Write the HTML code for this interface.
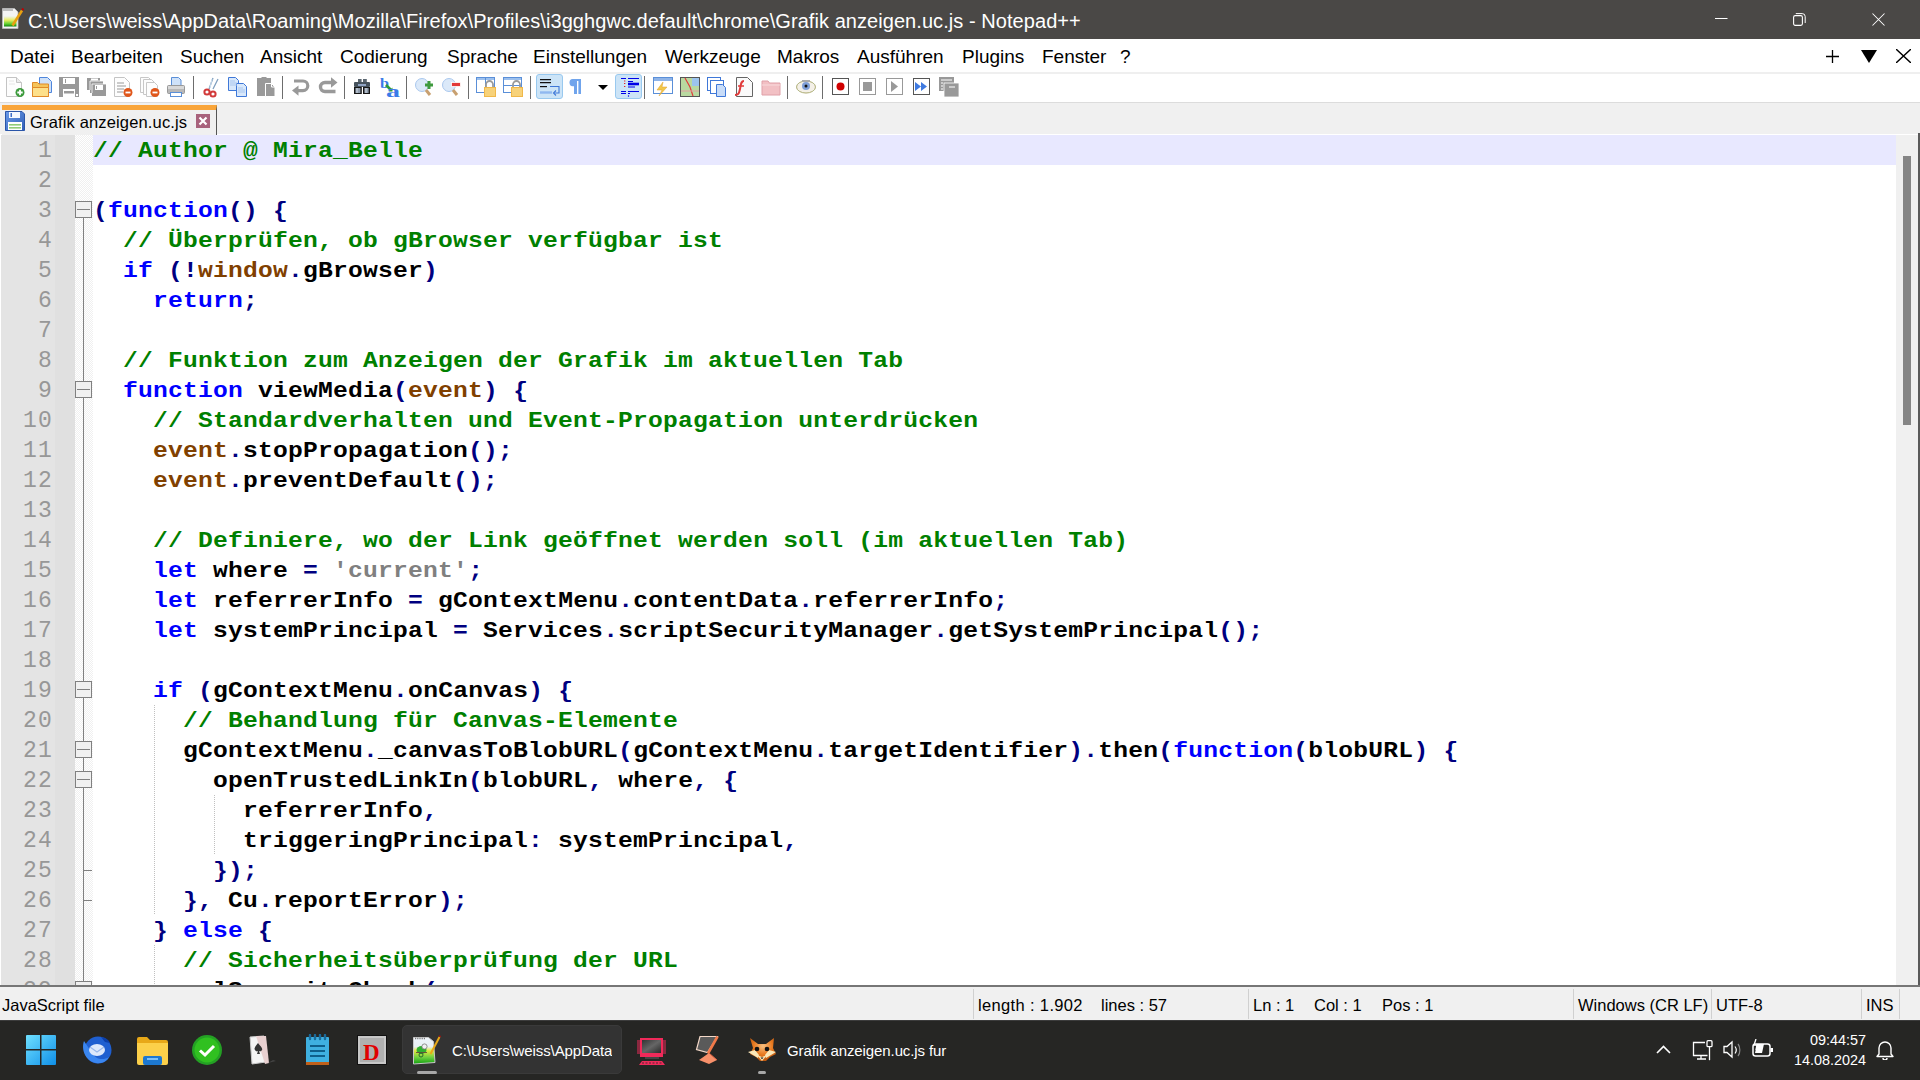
<!DOCTYPE html>
<html><head><meta charset="utf-8">
<style>
*{box-sizing:border-box;margin:0;padding:0}
html,body{width:1920px;height:1080px;overflow:hidden;background:#fff;font-family:"Liberation Sans",sans-serif}
.abs{position:absolute}
#title{position:absolute;left:0;top:0;width:1920px;height:39px;background:#4a4846;color:#fff}
#title .t{position:absolute;left:28px;top:10px;font-size:20px;letter-spacing:0.06px;white-space:nowrap}
#menu{position:absolute;left:0;top:39px;width:1920px;height:35px;background:#fff;border-bottom:2px solid #efefef}
#menu .m{position:absolute;top:7px;font-size:19px;color:#000;white-space:nowrap}
#tool{position:absolute;left:0;top:74px;width:1920px;height:29px;background:#fff;border-bottom:1px solid #dcdcdc}
.ic{position:absolute;top:3px;width:20px;height:20px;overflow:visible}
.tsep{position:absolute;top:2px;width:1px;height:23px;background:#6d6d6d}
.press{position:absolute;top:0px;width:27px;height:25px;background:#cce4f7;border:1px solid #99c9ef;border-radius:3px}
#tabs{position:absolute;left:0;top:103px;width:1920px;height:32px;background:#f0f0f0;border-bottom:1px solid #fff}
#editor{position:absolute;left:0;top:135px;width:1920px;height:850px;background:#fff;overflow:hidden}
#lnm{position:absolute;left:1px;top:135px;width:54px;height:850px;background:#e4e4e4}
#bkm{position:absolute;left:55px;top:135px;width:20px;height:850px;background:#e0e0e0}
#fld{position:absolute;left:75px;top:135px;width:18px;height:850px;background-color:#fff;
 background-image:linear-gradient(45deg,#f0f0f0 25%,transparent 25%,transparent 75%,#f0f0f0 75%),linear-gradient(45deg,#f0f0f0 25%,transparent 25%,transparent 75%,#f0f0f0 75%);
 background-size:2px 2px;background-position:0 0,1px 1px}
#curline{position:absolute;left:93px;top:135px;width:1803px;height:30px;background:#e8e8ff}
.ln{position:absolute;left:93px;height:30px;line-height:30px;font-family:"Liberation Mono",monospace;font-weight:bold;font-size:22px;letter-spacing:0.193px;transform:scaleX(1.12);transform-origin:0 0;white-space:pre;color:#000}
.num{position:absolute;left:1px;width:52px;height:30px;line-height:30px;text-align:right;font-family:"Liberation Mono",monospace;font-size:23px;letter-spacing:1.2px;color:#979797}
.c{color:#008000}.k{color:#0000ff}.o{color:#000080}.b{color:#804000}.s{color:#808080}
.guide{position:absolute;width:1px;background-image:linear-gradient(#c0c0c0 50%,transparent 50%);background-size:1px 2px}
#fline{position:absolute;left:83px;top:218px;width:1px;height:767px;background:#808080}
.fbox{position:absolute;left:75px;width:17px;height:17px;border:1px solid #808080;background:#f0f0f0}
.fbox:after{content:"";position:absolute;left:1px;top:7px;width:13px;height:1px;background:#808080}
.ftick{position:absolute;left:83px;width:9px;height:1px;background:#808080}
#vscroll{position:absolute;left:1896px;top:135px;width:22px;height:850px;background:#f0f0f0}
#thumb{position:absolute;left:1903px;top:156px;width:8px;height:269px;background:#858585}
#rborder{position:absolute;left:1918px;top:133px;width:2px;height:854px;background:#5a5a5a}
#hline{position:absolute;left:0;top:985px;width:1920px;height:2px;background:#767676}
#status{position:absolute;left:0;top:987px;width:1920px;height:33px;background:#f0f0f0}
#status .s1{position:absolute;top:9px;font-size:16.5px;color:#000;white-space:nowrap}
#status .sep{position:absolute;top:2px;width:1px;height:30px;background:#d0d0d0}
#taskbar{position:absolute;left:0;top:1020px;width:1920px;height:60px;background:#262624}
#tab{position:absolute;left:2px;top:2px;width:215px;height:31px;background:#f0f0f0;border-top:5px solid #f9a53a;border-right:1px solid #555}
#tabtxt{position:absolute;left:30px;top:10px;font-size:16.5px;color:#000;white-space:nowrap}
#tbline{position:absolute;left:0;top:0;width:1920px;height:1px;background:#3c3c3c}
.tbt{position:absolute;top:22px;font-size:15px;letter-spacing:-0.1px;color:#fff;white-space:nowrap;overflow:hidden}
#actbtn{position:absolute;left:402px;top:5px;width:220px;height:49px;background:#333;border:1px solid #3a3a3a;border-radius:5px}
#ind1{position:absolute;left:417px;top:51px;width:20px;height:3px;border-radius:2px;background:#a8a8a8}
#ind2{position:absolute;left:758px;top:51px;width:8px;height:3px;border-radius:2px;background:#a8a8a8}
#clk1{position:absolute;left:1790px;top:12px;width:76px;text-align:right;font-size:14.4px;color:#fff}
#clk2{position:absolute;left:1780px;top:32px;width:86px;text-align:right;font-size:14.4px;color:#fff}
</style></head><body>
<div id="title"><svg class="abs" style="left:2px;top:8px" width="22" height="21" viewBox="0 0 22 21"><defs><linearGradient id="npg" x1="0" y1="0" x2="0" y2="1"><stop offset="0" stop-color="#f0f4f8"/><stop offset=".4" stop-color="#e8ec60"/><stop offset=".75" stop-color="#60d030"/><stop offset="1" stop-color="#108010"/></linearGradient></defs><path d="M.5 .5h12l3.5 3.5v16.5h-15.5z" fill="#f4f4f4" stroke="#bbb" stroke-width=".8"/><path d="M2 8h12.5v10.5h-12.5z" fill="url(#npg)"/><path d="M1.5 2h9" stroke="#888" stroke-width="2" stroke-dasharray="1 1"/><path d="M20 2.5l-9.5 15" stroke="#e8a010" stroke-width="2.6"/><path d="M20.3 2l1-1.5" stroke="#c00000" stroke-width="2.4"/></svg>
<div class="t">C:\Users\weiss\AppData\Roaming\Mozilla\Firefox\Profiles\i3gghgwc.default\chrome\Grafik anzeigen.uc.js - Notepad++</div>
<svg class="abs" style="left:1715px;top:13px" width="13" height="13" viewBox="0 0 13 13"><path d="M0 5.5h12.5" stroke="#fff" stroke-width="1"/></svg>
<svg class="abs" style="left:1793px;top:13px" width="13" height="13" viewBox="0 0 13 13"><rect x=".6" y="2.6" width="8.8" height="9.8" rx="1.6" fill="none" stroke="#fff" stroke-width="1.1"/><path d="M2.8 .6h6.4a3 3 0 0 1 3 3v6.4" fill="none" stroke="#fff" stroke-width="1"/></svg>
<svg class="abs" style="left:1872px;top:13px" width="13" height="13" viewBox="0 0 13 13"><path d="M.5 .5l12 12M12.5 .5l-12 12" stroke="#fff" stroke-width="1.05"/></svg>
</div>
<div id="menu">
<div class="m" style="left:10px">Datei</div>
<div class="m" style="left:71px">Bearbeiten</div>
<div class="m" style="left:180px">Suchen</div>
<div class="m" style="left:260px">Ansicht</div>
<div class="m" style="left:340px">Codierung</div>
<div class="m" style="left:447px">Sprache</div>
<div class="m" style="left:533px">Einstellungen</div>
<div class="m" style="left:665px">Werkzeuge</div>
<div class="m" style="left:777px">Makros</div>
<div class="m" style="left:857px">Ausführen</div>
<div class="m" style="left:962px">Plugins</div>
<div class="m" style="left:1042px">Fenster</div>
<div class="m" style="left:1120px">?</div>
</div>
<div id="tool">
<!-- 1 new -->
<svg class="ic" style="left:5px" viewBox="0 0 20 20"><path d="M1.5 .5h10l5 5v14h-15z" fill="#fdfdfd" stroke="#c4c4c4"/><path d="M11.5 .5v5h5" fill="#ececec" stroke="#c4c4c4"/><path d="M4 4h5M4 7h6" stroke="#e6e6e6"/><circle cx="15" cy="15.5" r="4.5" fill="#3c9a3c"/><path d="M15 12.8v5.4M12.3 15.5h5.4" stroke="#fff" stroke-width="1.8"/></svg>
<!-- 2 open -->
<svg class="ic" style="left:31px" viewBox="0 0 20 20"><path d="M8.5 .5h8l4 4v11h-12z" fill="#cfe1f8" stroke="#4f86dc"/><path d="M1.5 5.5h5l1.5 1.5h9.5v12.5h-16z" fill="#f5c45a" stroke="#e08a28"/><path d="M1.5 10.5h16v9h-16z" fill="#fde08a" stroke="#e08a28"/></svg>
<!-- 3 save -->
<svg class="ic" style="left:59px" viewBox="0 0 20 20"><path d="M0 0h20v20h-20z" fill="#999"/><rect x="4" y="1" width="12" height="6" fill="#fff"/><rect x="6" y="2" width="1" height="4" fill="#999"/><rect x="4" y="12" width="12" height="8" fill="#fff"/><rect x="5" y="14" width="10" height="2.5" fill="#999"/><rect x="17" y="17" width="2" height="2" fill="#fff"/></svg>
<!-- 4 save all -->
<svg class="ic" style="left:87px" viewBox="0 0 20 20"><path d="M0 1h13v12h-13z" fill="#999"/><path d="M3 4h13v12h-13z" fill="#999"/><path d="M5 7h14v12h-14z" fill="#999"/><path d="M3 4h13M3 4v9M5 7h14M5 7v9" stroke="#fff" stroke-width=".8"/><rect x="4" y="1.5" width="7" height="2" fill="#fff"/><rect x="8" y="8" width="8" height="5" fill="#fff"/><rect x="9" y="9" width="1" height="3" fill="#999"/></svg>
<!-- 5 close -->
<svg class="ic" style="left:113px" viewBox="0 0 20 20"><path d="M1.5 .5h10l5 5v14h-15z" fill="#fdfdfd" stroke="#c4c4c4"/><path d="M4 6h7M4 9h9M4 12h7M4 15h6" stroke="#9a9a9a" stroke-width="1.2"/><circle cx="15" cy="15.5" r="4.5" fill="#e0561a"/><path d="M12.5 15.5h5" stroke="#fff" stroke-width="1.8"/></svg>
<!-- 6 close all -->
<svg class="ic" style="left:140px" viewBox="0 0 20 20"><path d="M.5 .5h8l3 3v12h-11z" fill="#fdfdfd" stroke="#c8c8c8"/><path d="M3.5 2.5h8l3 3v12h-11z" fill="#fdfdfd" stroke="#c8c8c8"/><path d="M6.5 5.5h8l3 3v11h-11z" fill="#fdfdfd" stroke="#c8c8c8"/><circle cx="15" cy="15.5" r="4.5" fill="#e0561a"/><path d="M12.5 15.5h5" stroke="#fff" stroke-width="1.8"/></svg>
<!-- 7 print -->
<svg class="ic" style="left:166px" viewBox="0 0 20 20"><path d="M5.5 .5h7l2.5 2.5v6h-9.5z" fill="#cfe2f9" stroke="#5a8fd8"/><rect x="1" y="8" width="18" height="9" rx="2" fill="#999"/><rect x="2" y="9" width="16" height="3" fill="#d8d8d8"/><rect x="2" y="12" width="16" height="4" fill="#b8b8b8"/><rect x="4.5" y="15.5" width="11" height="4" fill="#fff" stroke="#5a8fd8"/></svg>
<div class="tsep" style="left:193px"></div>
<!-- 8 cut -->
<svg class="ic" style="left:202px" viewBox="0 0 20 20"><path d="M7 12L11 1M11 12L16 2" stroke="#7f9fbf" stroke-width="1.3" fill="none"/><path d="M8 11l2 -9" stroke="#cfe0f0" stroke-width="1"/><circle cx="5" cy="15" r="2.6" fill="none" stroke="#d23a3a" stroke-width="2"/><circle cx="11" cy="17" r="2.6" fill="none" stroke="#d23a3a" stroke-width="2"/></svg>
<!-- 9 copy -->
<svg class="ic" style="left:228px" viewBox="0 0 20 20"><path d="M.5 .5h7l3 3v10h-10z" fill="#d8e8fb" stroke="#3f78d8"/><path d="M8.5 6.5h7l3 3v10h-10z" fill="#d8e8fb" stroke="#3f78d8"/><path d="M2 4h5M2 6h7M2 8h7M10 11h5M10 13h7M10 15h7" stroke="#a9c6ee"/></svg>
<!-- 10 paste -->
<svg class="ic" style="left:256px" viewBox="0 0 20 20"><path d="M1 1h4l1-1h4l1 1h4v18h-14z" fill="#999"/><path d="M9.5 6.5h6l3.5 3.5v9.5h-9.5z" fill="#999" stroke="#fff"/><path d="M15.5 6.5v3.5h3.5" fill="none" stroke="#fff"/></svg>
<div class="tsep" style="left:282px"></div>
<!-- 11 undo -->
<svg class="ic" style="left:291px" viewBox="0 0 20 20"><path d="M3 4h9a4.8 4.8 0 0 1 0 9.6h-6" fill="none" stroke="#999" stroke-width="3.2"/><path d="M1 13.6l6.5-5.2v10.4z" fill="#999"/></svg>
<!-- 12 redo -->
<svg class="ic" style="left:318px" viewBox="0 0 20 20"><path d="M13 5.5h-6a4.5 4.5 0 0 0 0 9h10.5" fill="none" stroke="#999" stroke-width="3.4"/><path d="M19.5 5.5l-6.5-5.2v10.4z" fill="#999"/></svg>
<div class="tsep" style="left:344px"></div>
<!-- 13 find -->
<svg class="ic" style="left:353px" viewBox="0 0 20 20"><rect x="5" y="2" width="3.6" height="4" fill="#5a6670"/><rect x="10" y="2" width="3.8" height="4" fill="#5a6670"/><rect x="1" y="5" width="16" height="5" rx="1" fill="#46525c"/><rect x="5" y="7" width="8" height="2" fill="#90a4c4"/><rect x="1" y="10" width="7.8" height="7" fill="#151515"/><rect x="2.4" y="11" width="5" height="5" fill="#8f9cac"/><rect x="10" y="10" width="7" height="7" fill="#151515"/><rect x="11.4" y="11" width="4.2" height="5" fill="#8f9cac"/><path d="M4 11v5M13 11v5" stroke="#d8e0ea" stroke-width=".9"/></svg>
<!-- 14 replace -->
<svg class="ic" style="left:380px" viewBox="0 0 20 20"><text x="0" y="10.5" font-family="Liberation Serif" font-weight="bold" font-size="14" fill="#3a7ae8" textLength="9" lengthAdjust="spacingAndGlyphs">b</text><path d="M6 8l5 5" stroke="#2e9a3a" stroke-width="2.6"/><path d="M12.5 10.5v4h-4z" fill="#2e9a3a"/><text x="6" y="20" font-family="Liberation Serif" font-weight="bold" font-size="17" fill="#3a7ae8" textLength="14" lengthAdjust="spacingAndGlyphs">a</text></svg>
<div class="tsep" style="left:406px"></div>
<!-- 15 zoom in -->
<svg class="ic" style="left:415px" viewBox="0 0 20 20"><circle cx="7" cy="8" r="6.5" fill="#dbe9f9" stroke="#aac8ee"/><path d="M11 13l4 5" stroke="#c8a070" stroke-width="3"/><path d="M14 4v8M10 8h8" stroke="#3e9a3e" stroke-width="3"/></svg>
<!-- 16 zoom out -->
<svg class="ic" style="left:442px" viewBox="0 0 20 20"><circle cx="7" cy="8" r="6.5" fill="#dbe9f9" stroke="#aac8ee"/><path d="M11 13l4 5" stroke="#c8a070" stroke-width="3"/><rect x="9.5" y="5.5" width="9" height="4" fill="#e23a3a" stroke="#fff" stroke-width=".8"/></svg>
<div class="tsep" style="left:468px"></div>
<!-- 17 sync v -->
<svg class="ic" style="left:476px" viewBox="0 0 20 20"><rect x=".5" y=".5" width="18" height="15" fill="#fff" stroke="#5a8fd8"/><rect x="1" y="1" width="17" height="2" fill="#9cc0ee"/><path d="M9.5 .5v15" stroke="#5a8fd8"/><path d="M10 10v-2.5a3.5 3.5 0 0 1 7 0v2.5" fill="none" stroke="#9a9a9a" stroke-width="1.8"/><rect x="8" y="10" width="12" height="10" fill="#f0b84a"/><rect x="9" y="11" width="10" height="8" fill="#f7d27a"/></svg>
<!-- 18 sync h -->
<svg class="ic" style="left:503px" viewBox="0 0 20 20"><rect x=".5" y=".5" width="18" height="15" fill="#fff" stroke="#5a8fd8"/><rect x="1" y="1" width="17" height="2" fill="#9cc0ee"/><path d="M.5 8.5h18" stroke="#5a8fd8"/><path d="M10 10v-2.5a3.5 3.5 0 0 1 7 0v2.5" fill="none" stroke="#9a9a9a" stroke-width="1.8"/><rect x="8" y="10" width="12" height="10" fill="#f0b84a"/><rect x="9" y="11" width="10" height="8" fill="#f7d27a"/></svg>
<div class="tsep" style="left:530px"></div>
<!-- 19 wrap pressed -->
<div class="press" style="left:536px"></div>
<svg class="ic" style="left:539px" viewBox="0 0 20 20"><path d="M1 2.7h11M1 5.6h11" stroke="#111" stroke-width="1.3"/><path d="M1 9.6h7" stroke="#111" stroke-width="1.2"/><path d="M1 15.5h12" stroke="#8fb8f0" stroke-width="2.4"/><path d="M11 9.5h9v6.5h-5" fill="none" stroke="#3f78d8" stroke-width="1.1"/><path d="M17 13.5l-2.5 2.5 2.5 2.5" fill="none" stroke="#3f78d8" stroke-width="1.1"/></svg>
<!-- 20 pilcrow -->
<svg class="ic" style="left:566px" viewBox="0 0 20 20"><path d="M8.5 2h-2a3 3.6 0 0 0 0 7.2h2z" fill="#70a4ec"/><rect x="8" y="2" width="7" height="2" fill="#70a4ec"/><rect x="8" y="2" width="3" height="15" fill="#70a4ec"/><rect x="12.4" y="2" width="2.6" height="15" fill="#70a4ec"/></svg>
<svg class="ic" style="left:593px" viewBox="0 0 20 20"><path d="M5 8h10l-5 5z" fill="#000"/></svg>
<!-- 22 indent guide pressed -->
<div class="press" style="left:615px"></div>
<svg class="ic" style="left:618px" viewBox="0 0 20 20"><path d="M3 1.5h5M10 1.5h11M10 4.5h5M10 10h7M3 14.5h5M10 14.5h11M3 16.5h5M10 16.5h2" stroke="#0000e8" stroke-width="1.2"/><path d="M10 7h11" stroke="#0000e8" stroke-width="2.6"/><path d="M6.7 3.5v1M6.7 6v1M6.7 9v1" stroke="#e81010" stroke-width="1.2"/><circle cx="10.5" cy="19" r=".7" fill="#0000e8"/></svg>
<div class="tsep" style="left:644px"></div>
<!-- 23 udl -->
<svg class="ic" style="left:653px" viewBox="0 0 20 20"><rect x=".5" y=".5" width="19" height="16" fill="#fff" stroke="#5a8fd8"/><rect x="1" y="1" width="18" height="3" fill="#8fb4e8"/><path d="M10 5l-6 8h5l-3 6 8-9h-5z" fill="#f2c84a" stroke="#e0a030" stroke-width=".5"/></svg>
<!-- 24 doc map -->
<svg class="ic" style="left:680px" viewBox="0 0 20 20"><rect x=".5" y=".5" width="19" height="19" fill="#b9d9a0" stroke="#555"/><path d="M12 1v8h7" fill="#8fb8e8"/><path d="M12 1h7v8h-7z" fill="#9cc4ee"/><path d="M5 1l5 9 3 9" stroke="#e03a3a" stroke-width="1.2" fill="none"/><path d="M1 14h18" stroke="#e0a0a0"/></svg>
<!-- 25 doc list -->
<svg class="ic" style="left:707px" viewBox="0 0 20 20"><rect x=".5" y=".5" width="13" height="13" fill="#fff" stroke="#3f78d8"/><rect x="3.5" y="3.5" width="13" height="13" fill="#fff" stroke="#3f78d8"/><path d="M9.5 7.5h6l3 3v9h-9z" fill="#c8dcf8" stroke="#3f78d8"/></svg>
<!-- 26 function list -->
<svg class="ic" style="left:734px" viewBox="0 0 20 20"><path d="M2.5 .5h11l5 5v14h-16z" fill="#fafafa" stroke="#666"/><path d="M10 4c-3 0-3 3-4 8s-2 6-5 6" fill="none" stroke="#e03a3a" stroke-width="2"/><path d="M4 9h6" stroke="#e03a3a" stroke-width="1.5"/></svg>
<!-- 27 folder ws -->
<svg class="ic" style="left:761px" viewBox="0 0 20 20"><path d="M1 4h6l1.5 2h10.5v12h-18z" fill="#f2c0c4" stroke="#e0a0a8"/><path d="M1 8h18" stroke="#f8dadc"/></svg>
<div class="tsep" style="left:787px"></div>
<!-- 28 eye -->
<svg class="ic" style="left:796px" viewBox="0 0 20 20"><ellipse cx="10" cy="10" rx="9.5" ry="6" fill="#f4f0e8" stroke="#d8b080" stroke-width="1"/><ellipse cx="10" cy="10" rx="9.5" ry="6" fill="none" stroke="#8fc090" stroke-width=".5"/><circle cx="10" cy="9" r="4" fill="#7f9fd8"/><circle cx="10" cy="9" r="1.5" fill="#111"/><rect x="6" y="3" width="8" height="2" fill="#aaa"/></svg>
<div class="tsep" style="left:822px"></div>
<!-- macros -->
<svg class="ic" style="left:831px" viewBox="0 0 20 20"><rect x="1.5" y="1.5" width="16" height="16" fill="#fff" stroke="#555"/><circle cx="9.5" cy="9.5" r="4" fill="#d00000"/></svg>
<svg class="ic" style="left:858px" viewBox="0 0 20 20"><rect x="1.5" y="1.5" width="16" height="16" fill="#fff" stroke="#999"/><rect x="5" y="5" width="9" height="9" fill="#999"/></svg>
<svg class="ic" style="left:885px" viewBox="0 0 20 20"><rect x="1.5" y="1.5" width="16" height="16" fill="#fff" stroke="#999"/><path d="M6 4l7 5.5-7 5.5z" fill="#999"/></svg>
<svg class="ic" style="left:912px" viewBox="0 0 20 20"><rect x="1.5" y="1.5" width="16" height="16" fill="#fff" stroke="#555"/><path d="M3 5l6 4.5-6 4.5zM9 5l6 4.5-6 4.5z" fill="#3f7ae0"/></svg>
<svg class="ic" style="left:939px" viewBox="0 0 20 20"><rect x="0" y="0" width="15" height="14" fill="#999"/><rect x="5" y="6" width="15" height="14" fill="#999" stroke="#fff" stroke-width=".8"/><path d="M2 3h11M2 6h2M2 9h2M2 12h2M10 10h6" stroke="#fff" stroke-width="1.2"/></svg>
</div>
<div id="mright">
<svg class="abs" style="left:1826px;top:50px" width="13" height="13" viewBox="0 0 13 13"><path d="M6.5 0v13M0 6.5h13" stroke="#000" stroke-width="1.3"/></svg>
<svg class="abs" style="left:1861px;top:49px" width="16" height="14" viewBox="0 0 16 14"><path d="M0 1h16l-8 13z" fill="#000"/></svg>
<svg class="abs" style="left:1896px;top:49px" width="15" height="14" viewBox="0 0 15 14"><path d="M0 0l15 14M15 0l-15 14" stroke="#000" stroke-width="1.4"/></svg>
</div>

<div id="tabs">
<div id="tab"></div>
<svg class="abs" style="left:5px;top:8px" width="20" height="20" viewBox="0 0 20 20"><defs><linearGradient id="flp" x1="0" y1="0" x2="1" y2="1"><stop offset="0" stop-color="#6a9ae8"/><stop offset="1" stop-color="#2f5fb8"/></linearGradient></defs><path d="M.5 .5h16.5l2.5 2.5v16.5h-19z" fill="url(#flp)" stroke="#2a55a8"/><rect x="4" y="1" width="11" height="6" fill="#f4f8ff"/><rect x="5.5" y="2" width="1.5" height="4" fill="#3f6fc8"/><rect x="3" y="11" width="14" height="8" fill="#fff"/><rect x="4" y="13" width="12" height="1.6" fill="#90cc78"/><rect x="4" y="16" width="12" height="1.6" fill="#90cc78"/></svg>
<div id="tabtxt" style="letter-spacing:0.15px">Grafik anzeigen.uc.js</div>
<svg class="abs" style="left:196px;top:11px" width="14" height="14" viewBox="0 0 14 14"><rect x="0" y="0" width="14" height="14" fill="#a8627c"/><path d="M3.5 3.5l7 7M10.5 3.5l-7 7" stroke="#fff" stroke-width="2.2"/></svg>
</div>

<div id="editor"></div>
<div id="lnm"></div><div id="bkm"></div><div id="fld"></div>
<div id="curline"></div>
<div class="num" style="top:136px">1</div>
<div class="num" style="top:166px">2</div>
<div class="num" style="top:196px">3</div>
<div class="num" style="top:226px">4</div>
<div class="num" style="top:256px">5</div>
<div class="num" style="top:286px">6</div>
<div class="num" style="top:316px">7</div>
<div class="num" style="top:346px">8</div>
<div class="num" style="top:376px">9</div>
<div class="num" style="top:406px">10</div>
<div class="num" style="top:436px">11</div>
<div class="num" style="top:466px">12</div>
<div class="num" style="top:496px">13</div>
<div class="num" style="top:526px">14</div>
<div class="num" style="top:556px">15</div>
<div class="num" style="top:586px">16</div>
<div class="num" style="top:616px">17</div>
<div class="num" style="top:646px">18</div>
<div class="num" style="top:676px">19</div>
<div class="num" style="top:706px">20</div>
<div class="num" style="top:736px">21</div>
<div class="num" style="top:766px">22</div>
<div class="num" style="top:796px">23</div>
<div class="num" style="top:826px">24</div>
<div class="num" style="top:856px">25</div>
<div class="num" style="top:886px">26</div>
<div class="num" style="top:916px">27</div>
<div class="num" style="top:946px">28</div>
<div class="num" style="top:976px">29</div>
<div id="fline"></div>
<div class="fbox" style="top:201px"></div>
<div class="fbox" style="top:381px"></div>
<div class="fbox" style="top:681px"></div>
<div class="fbox" style="top:741px"></div>
<div class="fbox" style="top:771px"></div>
<div class="fbox" style="top:981px"></div>
<div class="ftick" style="top:870px"></div>
<div class="ftick" style="top:900px"></div>
<div class="guide" style="left:154px;top:705px;height:210px"></div>
<div class="guide" style="left:154px;top:945px;height:60px"></div>
<div class="guide" style="left:214px;top:795px;height:60px"></div>
<div class="ln" style="top:137px"><span class="c">// Author @ Mira_Belle</span></div>
<div class="ln" style="top:167px"></div>
<div class="ln" style="top:197px"><span class="o">(</span><span class="k">function</span><span class="o">()</span> <span class="o">{</span></div>
<div class="ln" style="top:227px">  <span class="c">// Überprüfen, ob gBrowser verfügbar ist</span></div>
<div class="ln" style="top:257px">  <span class="k">if</span> <span class="o">(!</span><span class="b">window</span><span class="o">.</span>gBrowser<span class="o">)</span></div>
<div class="ln" style="top:287px">    <span class="k">return</span><span class="o">;</span></div>
<div class="ln" style="top:317px"></div>
<div class="ln" style="top:347px">  <span class="c">// Funktion zum Anzeigen der Grafik im aktuellen Tab</span></div>
<div class="ln" style="top:377px">  <span class="k">function</span> viewMedia<span class="o">(</span><span class="b">event</span><span class="o">)</span> <span class="o">{</span></div>
<div class="ln" style="top:407px">    <span class="c">// Standardverhalten und Event-Propagation unterdrücken</span></div>
<div class="ln" style="top:437px">    <span class="b">event</span><span class="o">.</span>stopPropagation<span class="o">();</span></div>
<div class="ln" style="top:467px">    <span class="b">event</span><span class="o">.</span>preventDefault<span class="o">();</span></div>
<div class="ln" style="top:497px"></div>
<div class="ln" style="top:527px">    <span class="c">// Definiere, wo der Link geöffnet werden soll (im aktuellen Tab)</span></div>
<div class="ln" style="top:557px">    <span class="k">let</span> where <span class="o">=</span> <span class="s">&#x27;current&#x27;</span><span class="o">;</span></div>
<div class="ln" style="top:587px">    <span class="k">let</span> referrerInfo <span class="o">=</span> gContextMenu<span class="o">.</span>contentData<span class="o">.</span>referrerInfo<span class="o">;</span></div>
<div class="ln" style="top:617px">    <span class="k">let</span> systemPrincipal <span class="o">=</span> Services<span class="o">.</span>scriptSecurityManager<span class="o">.</span>getSystemPrincipal<span class="o">();</span></div>
<div class="ln" style="top:647px"></div>
<div class="ln" style="top:677px">    <span class="k">if</span> <span class="o">(</span>gContextMenu<span class="o">.</span>onCanvas<span class="o">)</span> <span class="o">{</span></div>
<div class="ln" style="top:707px">      <span class="c">// Behandlung für Canvas-Elemente</span></div>
<div class="ln" style="top:737px">      gContextMenu<span class="o">.</span>_canvasToBlobURL<span class="o">(</span>gContextMenu<span class="o">.</span>targetIdentifier<span class="o">).</span>then<span class="o">(</span><span class="k">function</span><span class="o">(</span>blobURL<span class="o">)</span> <span class="o">{</span></div>
<div class="ln" style="top:767px">        openTrustedLinkIn<span class="o">(</span>blobURL<span class="o">,</span> where<span class="o">,</span> <span class="o">{</span></div>
<div class="ln" style="top:797px">          referrerInfo<span class="o">,</span></div>
<div class="ln" style="top:827px">          triggeringPrincipal<span class="o">:</span> systemPrincipal<span class="o">,</span></div>
<div class="ln" style="top:857px">        <span class="o">});</span></div>
<div class="ln" style="top:887px">      <span class="o">},</span> Cu<span class="o">.</span>reportError<span class="o">);</span></div>
<div class="ln" style="top:917px">    <span class="o">}</span> <span class="k">else</span> <span class="o">{</span></div>
<div class="ln" style="top:947px">      <span class="c">// Sicherheitsüberprüfung der URL</span></div>
<div class="ln" style="top:977px">      urlSecurityCheck<span class="o">(</span></div>
<div id="vscroll"></div><div id="thumb"></div><div id="rborder"></div>
<div id="hline"></div>
<div id="status">
<div class="s1" style="left:2px">JavaScript file</div>
<div class="sep" style="left:973px"></div>
<div class="s1" style="left:978px;letter-spacing:0.35px">length : 1.902</div>
<div class="s1" style="left:1101px">lines : 57</div>
<div class="sep" style="left:1248px"></div>
<div class="s1" style="left:1253px">Ln : 1</div>
<div class="s1" style="left:1314px">Col : 1</div>
<div class="s1" style="left:1382px">Pos : 1</div>
<div class="sep" style="left:1573px"></div>
<div class="s1" style="left:1578px">Windows (CR LF)</div>
<div class="sep" style="left:1711px"></div>
<div class="s1" style="left:1716px">UTF-8</div>
<div class="sep" style="left:1861px"></div>
<div class="s1" style="left:1866px">INS</div>
<div class="sep" style="left:1899px"></div>
</div>
<div id="taskbar">
<div id="tbline"></div>
<!-- windows -->
<svg class="abs" style="left:26px;top:15px" width="30" height="30" viewBox="0 0 30 30"><defs><linearGradient id="wg" x1="0" y1="0" x2="1" y2="1"><stop offset="0" stop-color="#6fe0ff"/><stop offset="1" stop-color="#0f8fe8"/></linearGradient></defs><path d="M0 1a1 1 0 0 1 1-1h13v14h-14zM15.5 0h13.5a1 1 0 0 1 1 1v13h-14.5zM0 15.5h14v14.5h-13a1 1 0 0 1-1-1zM15.5 15.5h14.5v13.5a1 1 0 0 1-1 1h-13.5z" fill="url(#wg)"/></svg>
<!-- thunderbird -->
<svg class="abs" style="left:81px;top:15px" width="32" height="30" viewBox="0 0 32 30"><circle cx="17" cy="15" r="13.5" fill="#1f5fd0"/><path d="M3 6c-3 8 1 20 12 22 6 1 11-2 13-6-6 4-14 2-17-4" fill="#3a86f0"/><path d="M20 2c4 0 8 3 9 6l-5-1" fill="#0c3fa8"/><ellipse cx="16" cy="15" rx="8" ry="6" fill="#dde8fb"/><path d="M9 12l7 5 7-5" fill="none" stroke="#9ab8ea" stroke-width="1.2"/></svg>
<!-- explorer -->
<svg class="abs" style="left:137px;top:17px" width="31" height="28" viewBox="0 0 31 28"><path d="M0 2a2 2 0 0 1 2-2h8l3 3h16a2 2 0 0 1 2 2v4h-31z" fill="#e8a818"/><path d="M0 6h31v20a2 2 0 0 1-2 2h-27a2 2 0 0 1-2-2z" fill="#fcd04a"/><rect x="6" y="19" width="19" height="9" rx="2" fill="#1d78d0"/><rect x="10" y="21" width="11" height="2" fill="#7cc0f8"/></svg>
<!-- green check -->
<svg class="abs" style="left:192px;top:15px" width="30" height="30" viewBox="0 0 30 30"><circle cx="15" cy="15" r="15" fill="#24a024"/><circle cx="15" cy="15" r="12.5" fill="#30c020"/><path d="M8 15.5l5 4.5 9-9" fill="none" stroke="#fff" stroke-width="3"/></svg>
<!-- cards -->
<svg class="abs" style="left:246px;top:15px" width="30" height="30" viewBox="0 0 30 30"><path d="M4 2l14-1 2 26-14 2z" fill="#f4f4f4" stroke="#c8c8c8"/><path d="M10 1l10 0 3 27-4 1z" fill="#e8d0d0"/><path d="M12 8c-3 4-5 6-2 8 1 1 2 0 2 0l-1 3h3l-1-3s1 1 2 0c3-2 0-4-3-8z" fill="#333"/><path d="M22 28l8-2-3-1z" fill="#444"/></svg>
<!-- notepad -->
<svg class="abs" style="left:306px;top:14px" width="23" height="31" viewBox="0 0 23 31"><rect x="0" y="3" width="23" height="27" rx="1" fill="#3fb0e0"/><rect x="0" y="28" width="23" height="3" fill="#c0601a"/><path d="M4 1v4M9 1v4M14 1v4M19 1v4" stroke="#1a6a9a" stroke-width="2.4" stroke-linecap="round"/><path d="M4 12h15M4 17h15M4 22h15" stroke="#0f5f8a" stroke-width="2"/></svg>
<!-- D -->
<svg class="abs" style="left:357px;top:15px" width="30" height="30" viewBox="0 0 30 30"><rect x="0" y="0" width="30" height="30" fill="#111"/><rect x="1" y="1" width="28" height="28" fill="#c8c8c8"/><rect x="3" y="3" width="24" height="24" fill="#b0b0b0"/><text x="6" y="25" font-family="Liberation Serif" font-weight="bold" font-size="23" fill="#e00000">D</text></svg>
<!-- active npp -->
<div id="actbtn"></div>
<svg class="abs" style="left:412px;top:15px" width="30" height="31" viewBox="0 0 30 31"><defs><linearGradient id="npg2" x1="0" y1="0" x2="0" y2="1"><stop offset="0" stop-color="#eef4fa"/><stop offset=".35" stop-color="#e8f0f4"/><stop offset=".5" stop-color="#e0e840"/><stop offset=".75" stop-color="#70d040"/><stop offset="1" stop-color="#10a010"/></linearGradient></defs><path d="M1.5 2.5h15l5 4 1.5 21-21.5 1.5z" fill="url(#npg2)" stroke="#c8c8c8"/><path d="M3 3.5h11" stroke="#777" stroke-width="1.6" stroke-dasharray="1.2 1"/><ellipse cx="9.5" cy="15" rx="5" ry="4" fill="#30b030"/><circle cx="12.5" cy="11.5" r="2.6" fill="#f0f0f0" stroke="#777" stroke-width=".8"/><path d="M4 17.5h11" stroke="#6a4a3a" stroke-width=".9"/><circle cx="9" cy="20" r="2" fill="none" stroke="#2a6a2a" stroke-width="1"/><path d="M27.5 2l-9 17" stroke="#e8a818" stroke-width="2"/><path d="M27.6 1.8l.6-1.2" stroke="#b01010" stroke-width="1.8"/></svg>
<div class="tbt" style="left:452px;width:160px">C:\Users\weiss\AppData</div>
<div id="ind1"></div>
<!-- red monitor -->
<svg class="abs" style="left:636px;top:17px" width="32" height="29" viewBox="0 0 32 29"><defs><linearGradient id="scr" x1="0" y1="0" x2="1" y2="1"><stop offset="0" stop-color="#333"/><stop offset=".5" stop-color="#666"/><stop offset="1" stop-color="#2a2a2a"/></linearGradient></defs><rect x="4" y="1" width="23" height="19" fill="#f02a5a"/><rect x="6" y="3" width="19" height="13" fill="url(#scr)"/><path d="M1 4h3M1 6h3M1 8h3M1 10h3M1 12h3M1 14h3M1 16h3M27 4h3M27 6h3M27 8h3M27 10h3M27 12h3M27 14h3M27 16h3" stroke="#f02a5a" stroke-width="1.2"/><rect x="9" y="20" width="14" height="2" fill="#444"/><path d="M3 28l3-4h20l3 4z" fill="#f02a5a"/><path d="M6 26h20" stroke="#2a2a2a" stroke-width=".8" stroke-dasharray="2 1.5"/></svg>
<!-- tablet -->
<svg class="abs" style="left:695px;top:15px" width="26" height="30" viewBox="0 0 26 30"><path d="M5 1.5h17.5l-10 16-11-3z" fill="#5a5a5a" stroke="#f4d8c8" stroke-width="1.2"/><path d="M22.5 1.5l-9.5 17" stroke="#f07848" stroke-width="2.6"/><path d="M4 25l10-7 8 7-8 4z" fill="#f8906a"/><path d="M14 18l8 7" stroke="#d86040" stroke-width="1"/></svg>
<!-- fox -->
<svg class="abs" style="left:747px;top:17px" width="30" height="26" viewBox="0 0 30 26"><defs><radialGradient id="fox" cx=".5" cy=".35" r=".6"><stop offset="0" stop-color="#f8c080"/><stop offset=".6" stop-color="#e87a20"/><stop offset="1" stop-color="#c05a10"/></radialGradient></defs><path d="M3 1l8 6h8l8-6-1 10 3 6-6 3-4 4h-6l-4-4-6-3 3-6z" fill="url(#fox)"/><path d="M1 15l7-2 4 5-1 3zM29 15l-7-2-4 5 1 3z" fill="#fbe8b8"/><path d="M10 18l5 6 5-6-5 2z" fill="#fbe8b8"/><circle cx="10" cy="12" r="2.3" fill="#111"/><circle cx="20" cy="12" r="2.3" fill="#111"/><path d="M13.5 20.5h3l-1.5 1.8z" fill="#111"/></svg>
<div class="tbt" style="left:787px;width:160px">Grafik anzeigen.uc.js fur</div>
<div id="ind2"></div>
<!-- tray -->
<svg class="abs" style="left:1656px;top:25px" width="15" height="9" viewBox="0 0 15 9"><path d="M1 8l6.5-6.5 6.5 6.5" fill="none" stroke="#fff" stroke-width="1.6"/></svg>
<svg class="abs" style="left:1692px;top:20px" width="22" height="21" viewBox="0 0 22 21"><path d="M13 2.5h-11.5v13h14" fill="none" stroke="#fff" stroke-width="1.3"/><path d="M5 19h9M9 15.5v3.5" stroke="#fff" stroke-width="1.3"/><rect x="15" y=".7" width="5" height="6" rx="1" fill="none" stroke="#fff" stroke-width="1.3"/><path d="M17.5 6.7v13.5" stroke="#fff" stroke-width="1.3"/></svg>
<svg class="abs" style="left:1723px;top:20px" width="21" height="20" viewBox="0 0 21 20"><path d="M1 6.5h3l5-4.5v15l-5-4.5h-3z" fill="none" stroke="#fff" stroke-width="1.3"/><path d="M12 6.5c1.5 2 1.5 5 0 7" fill="none" stroke="#fff" stroke-width="1.2"/><path d="M15 4c2.5 3 2.5 9 0 12" fill="none" stroke="#888" stroke-width="1.2"/></svg>
<svg class="abs" style="left:1752px;top:19px" width="22" height="19" viewBox="0 0 22 19"><rect x="1" y="5" width="17" height="12" rx="2.5" fill="none" stroke="#fff" stroke-width="1.5"/><rect x="18.5" y="9" width="2.5" height="4" fill="#fff"/><path d="M3 14l2-9h7l-2 9z" fill="#fff"/><path d="M4 0l-2 6h3l-1 5" stroke="#fff" stroke-width="1.3" fill="none"/></svg>
<div id="clk1">09:44:57</div>
<div id="clk2">14.08.2024</div>
<svg class="abs" style="left:1876px;top:20px" width="18" height="20" viewBox="0 0 18 20"><path d="M3 14v-6a6 6 0 0 1 12 0v6l2 2.5h-16z" fill="none" stroke="#fff" stroke-width="1.4" stroke-linejoin="round"/><path d="M7 18a2 2 0 0 0 4 0" fill="none" stroke="#fff" stroke-width="1.4"/></svg>
</div>

</body></html>
